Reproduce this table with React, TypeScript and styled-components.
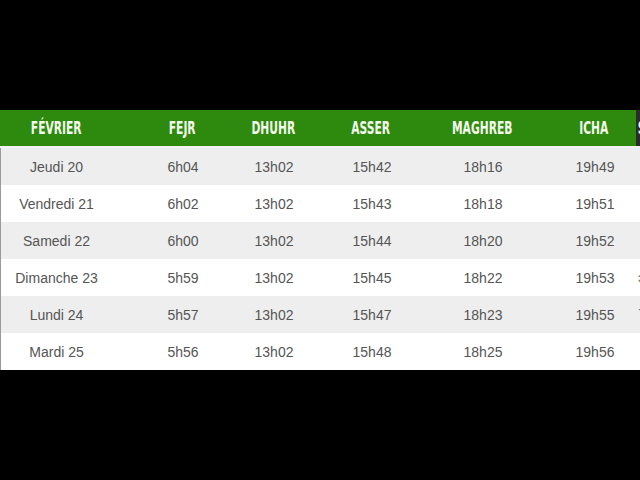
import React from "react";
import styled, { createGlobalStyle } from "styled-components";

const Global = createGlobalStyle`
  html, body { margin: 0; padding: 0; background: #000; }
  body { width: 640px; height: 480px; overflow: hidden; }
`;

const Page = styled.div`
  width: 640px;
  height: 480px;
  background: #000;
  padding-top: 110px;
  box-sizing: border-box;
  overflow: hidden;
`;

const Table = styled.div`
  display: flex;
  flex-direction: column;
  width: 640px;
`;

const cols = "112px 140px 42px 154px 68px 120px 1fr";

const HeadRow = styled.div`
  display: grid;
  grid-template-columns: ${cols};
  height: 36px;
  border-bottom: 2px solid #f3f3f3;
`;

const HeadCell = styled.div<{ $tail?: boolean }>`
  display: flex;
  align-items: center;
  justify-content: ${(p) => (p.$tail ? "flex-start" : "center")};
  white-space: nowrap;
  min-width: 0;
  overflow: ${(p) => (p.$tail ? "hidden" : "visible")};
  background: ${(p) => (p.$tail ? "#2b2b2b" : "#2e8a0f")};
  color: #f4f8ea;
  &:nth-child(6) { padding-left: 36px; }
`;

const HeadLabel = styled.span`
  display: inline-block;
  font-family: "DejaVu Sans Condensed", "DejaVu Sans", sans-serif;
  font-weight: bold;
  font-size: 17px;
  letter-spacing: 0;
  transform: scaleX(0.7);
`;

const Row = styled.div<{ $alt: boolean }>`
  display: grid;
  grid-template-columns: ${cols};
  height: 37px;
  background: ${(p) => (p.$alt ? "#eeeeee" : "#ffffff")};
  border-left: 1px solid #9a9a9a;
  box-sizing: border-box;
`;

const Cell = styled.div<{ $tail?: boolean }>`
  display: flex;
  align-items: center;
  justify-content: ${(p) => (p.$tail ? "flex-start" : "center")};
  white-space: nowrap;
  min-width: 0;
  font-family: "Liberation Sans", Arial, sans-serif;
  font-size: 14px;
  color: #555555;
  &:first-child { margin-left: -1px; }
  &:nth-child(6) { padding-left: 36px; }
`;

const Tail = styled.span`
  padding-left: 1px;
  font-size: 12px;
  color: #666;
`;

const headers = ["FÉVRIER", "FEJR", "DHUHR", "ASSER", "MAGHREB", "ICHA"];

const rows: { d: string; t: string[]; tail?: string }[] = [
  { d: "Jeudi 20", t: ["6h04", "13h02", "15h42", "18h16", "19h49"] },
  { d: "Vendredi 21", t: ["6h02", "13h02", "15h43", "18h18", "19h51"] },
  { d: "Samedi 22", t: ["6h00", "13h02", "15h44", "18h20", "19h52"] },
  { d: "Dimanche 23", t: ["5h59", "13h02", "15h45", "18h22", "19h53"], tail: "ɔ" },
  { d: "Lundi 24", t: ["5h57", "13h02", "15h47", "18h23", "19h55"], tail: "`" },
  { d: "Mardi 25", t: ["5h56", "13h02", "15h48", "18h25", "19h56"] },
];

export default function App() {
  return (
    <Page>
      <Global />
      <Table>
        <HeadRow>
          {headers.map((h) => (
            <HeadCell key={h}>
              <HeadLabel>{h}</HeadLabel>
            </HeadCell>
          ))}
          <HeadCell $tail>
            <HeadLabel>S</HeadLabel>
          </HeadCell>
        </HeadRow>
        {rows.map((r, i) => (
          <Row key={r.d} $alt={i % 2 === 0}>
            <Cell>{r.d}</Cell>
            {r.t.map((t, j) => (
              <Cell key={j}>{t}</Cell>
            ))}
            <Cell $tail>{r.tail ? <Tail>{r.tail}</Tail> : null}</Cell>
          </Row>
        ))}
      </Table>
    </Page>
  );
}
